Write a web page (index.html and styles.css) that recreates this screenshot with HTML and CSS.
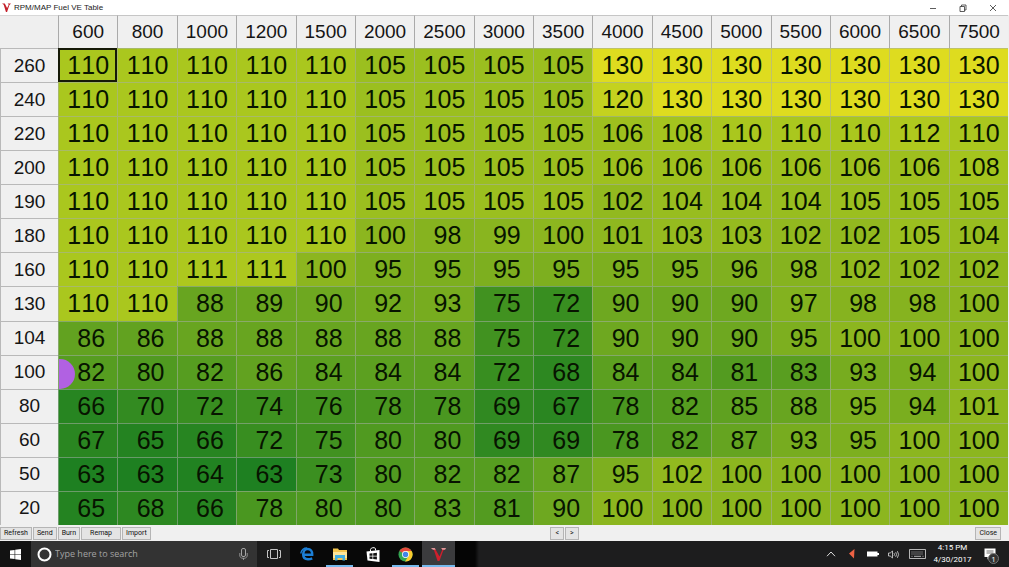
FILE: index.html
```html
<!DOCTYPE html>
<html lang="en">
<head>
<meta charset="utf-8">
<title>RPM/MAP Fuel VE Table</title>
<link rel="stylesheet" href="styles.css">
</head>
<body>
<header class="titlebar">
  <svg class="logo" viewBox="0 0 16 16" aria-hidden="true"><path d="M0 1h5l4 8 3-6-2-2h6l-3 3-4 12H7L3 3z" fill="#c4202b"/></svg>
  <h1 class="title">RPM/MAP Fuel VE Table</h1>
  <div class="window-buttons">
    <button aria-label="Minimize"><svg viewBox="0 0 8 8"><path d="M1 4.500h6"/></svg></button>
    <button aria-label="Restore"><svg viewBox="0 0 8 8"><path d="M1 2.500h4.500v5H1zM2.500 2.500V1H7v5H5.500"/></svg></button>
    <button aria-label="Close window"><svg viewBox="0 0 8 8"><path d="M1 1l6 6M7 1L1 7"/></svg></button>
  </div>
</header>

<main class="grid-area">
  <table class="ve-table">
    <thead><tr id="rpm"><td class="corner"></td></tr></thead>
    <tbody id="cells"></tbody>
  </table>
</main>

<div class="toolbar">
  <div class="tool-group">
    <button class="tool">Refresh</button><button class="tool">Send</button><button class="tool">Burn</button><button class="tool tool-wide">Remap</button><button class="tool">Import</button>
  </div>
  <div class="tool-group pager">
    <button class="tool">&lt;</button><button class="tool">&gt;</button>
  </div>
  <div class="tool-group tool-end"><button class="tool">Close</button></div>
</div>

<footer class="taskbar">
  <button class="start" aria-label="Start"><svg width="11" height="11" viewBox="0 0 11 11"><path d="M0 1.600l4.600-.7v4.300H0zM5.200.8L11 0v5.200H5.200zM0 5.800h4.600v4.300L0 9.400zM5.200 5.800H11V11l-5.800-.8z" fill="#fff"/></svg></button>
  <div class="search">
    <svg width="15" height="15" viewBox="0 0 15 15"><circle cx="7.500" cy="7.500" r="6" fill="none" stroke="#fff" stroke-width="2"/></svg>
    <input type="text" placeholder="Type here to search" aria-label="Type here to search">
    <svg width="9" height="12" viewBox="0 0 9 12" fill="none" stroke="#a5a5a5"><rect x="2.500" y=".5" width="4" height="8" rx="1.500"/><path d="M.8 5v3.500l2 1.700h3.400l2-1.700V5M4.500 10v2" stroke-width=".8"/></svg>
  </div>
  <nav class="apps">
    <button class="app app-view" aria-label="Task View"><svg width="14" height="12" viewBox="0 0 14 12" fill="none" stroke="#c4c4c4"><path d="M3.500 1.500h7v9h-7zM2 2.500H.5v7H2M12 2.500h1.500v7H12"/></svg></button>
    <button class="app" aria-label="Edge"><svg width="14" height="14" viewBox="0 0 14 14" fill="none" stroke="#1c7fd6"><path d="M4 7.700h8.200C12.500 4 10.500 2 7.600 2 4.800 2 3.200 4.600 3.200 7.600c0 3 2 4.700 4.800 4.700 1.700 0 3-.4 4.200-1" stroke-width="2.500"/><path d="M.7 6.500C1.500 3.200 4 1 7 1" stroke-width="1.300"/></svg></button>
    <button class="app app-open" aria-label="File Explorer"><svg width="16" height="13" viewBox="0 0 16 13"><path d="M1 .5h5l1 1.500h8v10H1z" fill="#f4c64e"/><path d="M1 4h14v6H1z" fill="#fde69a"/><path d="M3 7h10v5.500h-2.500V10h-5v2.500H3z" fill="#42aee0"/></svg></button>
    <button class="app" aria-label="Store"><svg width="14" height="15" viewBox="0 0 14 15"><path d="M.5 4.500L13.500 3v12L1.500 13.500z" fill="#fff"/><path d="M4.500 4V2.500C4.500.5 9.500-.2 9.500 2v1.500" fill="none" stroke="#fff"/><path d="M3.500 6.600l3-.3v2.500h-3zM7.200 6.200l3.700-.4v3H7.200zM3.500 9.500h3V12l-3-.3zM7.200 9.500h3.700v3l-3.700-.4z" fill="#111"/></svg></button>
    <button class="app app-open" aria-label="Chrome"><svg width="15" height="15" viewBox="0 0 16 16"><circle cx="8" cy="8" r="7.500" fill="#33a652"/><path d="M8 8L1.500 4.250A7.500 7.500 0 0 1 14.500 4.250H8z" fill="#e5483b"/><path d="M14.500 4.250A7.500 7.500 0 0 1 7.500 15.500L11.200 9.500 8 4.250z" fill="#fbcb2e"/><circle cx="8" cy="8" r="3.700" fill="#fff"/><circle cx="8" cy="8" r="2.900" fill="#4285e8"/></svg></button>
    <button class="app app-open app-active" aria-label="VE Table"><svg width="15" height="15" viewBox="0 0 16 16"><path d="M0 1h4l5 9 3-7-1-2h5l-3 3-4 11H7L3 3z" fill="#cf1f2c"/><path d="M0 1h4l1 2H2zM11 1h5l-1 2h-3z" fill="#d99a9c"/></svg></button>
  </nav>
  <div class="desktop-strip"></div>
  <div class="tray">
    <button aria-label="Show hidden icons"><svg width="10" height="6" viewBox="0 0 10 6"><path d="M1 5.200L5 1l4 4.200" fill="none" stroke="#ddd"/></svg></button>
    <button aria-label="Notifier"><svg width="8" height="10" viewBox="0 0 8 10"><path d="M1 4.500L6.500 0 6 9.500z" fill="#ee6244"/></svg></button>
    <button aria-label="Battery"><svg width="12" height="6" viewBox="0 0 12 6"><path d="M0 .5h10.500V2H12v2h-1.500v1.500H0z" fill="#fff"/></svg></button>
    <button aria-label="Volume"><svg width="12" height="9" viewBox="0 0 12 9" fill="none" stroke="#ddd" stroke-width=".8"><path d="M.5 3h1.700L4.500 1v7L2.200 6H.5zM6 3.200q1 1.300 0 2.600M7.700 2.200q1.700 2.300 0 4.600M9.400 1.200q2.400 3.300 0 6.600"/></svg></button>
    <button class="keyboard" aria-label="Keyboard"><svg width="17" height="10" viewBox="0 0 17 10" fill="none" stroke="#ddd" stroke-width=".8"><path d="M.5.500h16v9H.5z"/><path d="M2.500 3h12M2.500 5h12" stroke-dasharray="1 1"/><path d="M2.500 7.300h1M5 7.300h7M13.500 7.300h1"/></svg></button>
    <div class="clock"><span>4:15 PM</span><span>4/30/2017</span></div>
    <button class="notice" aria-label="1 notification"><svg width="12" height="12" viewBox="0 0 12 12"><path d="M.5.500h11v8.500H6L3.500 11.500V9h-3z" fill="#fff"/><path d="M2.500 3h7M2.500 5h7" stroke="#333" stroke-width=".7"/></svg><span class="count">1</span></button>
  </div>
</footer>
<script src="table.js"></script>
</body>
</html>
```
FILE: styles.css
```css
* { box-sizing: border-box; }

body {
  margin: 0;
  height: 100vh;
  display: flex;
  flex-direction: column;
  overflow: hidden;
  background: #efefef;
  font-family: "Open Sans", "Noto Sans", sans-serif;
}

button {
  margin: 0;
  padding: 0;
  border: 0;
  background: none;
  color: inherit;
  font: inherit;
}

svg { display: block; }

.titlebar {
  flex: none;
  display: flex;
  align-items: center;
  height: 15px;
  padding-left: 2px;
  background: #fff;
}
.logo { width: 9px; height: 9px; }
.title {
  flex: 1;
  margin: 0 0 0 3px;
  font-family: "Liberation Sans", Arial, sans-serif;
  font-size: 8px;
  line-height: 15px;
  font-weight: 400;
  color: #222;
}
.window-buttons { display: flex; padding-right: 1px; }
.window-buttons button {
  width: 30px;
  height: 15px;
  display: grid;
  place-items: center;
}
.window-buttons svg {
  width: 8px;
  height: 8px;
  fill: none;
  stroke: #333;
  stroke-width: 0.8;
}

.grid-area {
  flex: 1;
  min-height: 0;
  padding-right: 1px;
}
.ve-table {
  width: 100%;
  height: 100%;
  table-layout: fixed;
  border-collapse: separate;
  border-spacing: 0;
  font-family: "Liberation Sans", Arial, sans-serif;
  font-kerning: none;
  text-align: center;
}
.ve-table th, .ve-table td { padding: 0; }
.ve-table th {
  border: solid #b9b9b9;
  border-width: 1px 0 0 1px;
  background: #f0f0f0;
  color: #151515;
  font-size: 19px;
  line-height: 20px;
  font-weight: 400;
}
.ve-table thead tr { height: 33px; }
.ve-table thead th {
  border-top-color: #c6c6c6;
  border-left: 1px solid #aaa;
}
.ve-table .corner {
  width: 58px;
  border-top: 1px solid #d8d8d8;
}
.value {
  position: relative;
  border: solid rgba(165, 175, 165, 0.55);
  border-width: 1px 0 0 1px;
  color: #071400;
  font-size: 25px;
  line-height: 26px;
}
.ve-table .value { padding-bottom: 1px; }
.ve-table .two-digit { padding-left: 6px; }
.selected { outline: 2px solid #161a08; outline-offset: -2px; }

.marker {
  position: absolute;
  left: 0;
  top: 3px;
  width: 16px;
  height: 30px;
  border-radius: 0 15px 15px 0;
  background: #b161e2;
}

.toolbar {
  flex: none;
  display: grid;
  grid-template-columns: 1fr auto 1fr;
  align-items: center;
  height: 16px;
  padding: 0 8px 0 0;
  background: #f0f0f0;
}
.tool-group { display: flex; gap: 1px; }
.pager { padding-left: 128px; }
.tool-end { justify-content: flex-end; }
.tool {
  height: 13px;
  padding: 0 3px;
  border: 1px solid #b5b5b5;
  background: #e4e4e4;
  color: #111;
  font-family: Roboto, "Liberation Sans", sans-serif;
  font-size: 7px;
  line-height: 10px;
}
.tool-wide { padding: 0 8px; }
.pager .tool { padding: 0 4px; }

.taskbar {
  flex: none;
  display: flex;
  height: 26px;
  background: #1d1d1e;
  color: #fff;
}
.start {
  width: 31px;
  display: grid;
  place-items: center;
  background: #121212;
}
.search {
  flex: none;
  width: 226px;
  display: flex;
  align-items: center;
  gap: 3px;
  padding: 0 9px 0 6px;
  background: #333;
}
.search input {
  flex: 1;
  min-width: 0;
  padding: 0;
  border: 0;
  outline: 0;
  background: none;
  color: #fff;
  font: 9px/14px "Open Sans", "Noto Sans", sans-serif;
}
.search input::placeholder { color: #a3a3a3; opacity: 1; }
.apps { display: flex; background: #080808; }
.app {
  width: 33px;
  display: grid;
  place-items: center;
  border: solid transparent;
  border-width: 0 3px;
}
.app-view { background: #1c1c1c; }
.app-open { box-shadow: inset 0 -2px #76b9ed; }
.app-active { background: #3b3b3d; border-width: 0; }
.desktop-strip {
  flex: 1;
  background: linear-gradient(90deg, #050505 20px, #1d1d1e 24px);
}
.tray { display: flex; align-items: center; padding-right: 4px; }
.tray button {
  width: 21px;
  height: 26px;
  display: grid;
  place-items: center;
}
.tray .keyboard { width: 27px; }
.clock {
  width: 43px;
  display: flex;
  flex-direction: column;
  align-items: center;
  font-family: Roboto, "Liberation Sans", sans-serif;
  font-size: 8px;
  line-height: 12px;
}
.tray .notice { position: relative; width: 31px; }
.count {
  position: absolute;
  left: 14px;
  top: 12px;
  width: 11px;
  height: 11px;
  border: 1px solid #777;
  border-radius: 50%;
  background: #333;
  font-size: 8px;
  line-height: 9px;
  text-align: center;
}
```
FILE: table.js
```js
const rpm = [600, 800, 1000, 1200, 1500, 2000, 2500, 3000, 3500, 4000, 4500, 5000, 5500, 6000, 6500, 7500];
const rows = [
  [260, 110, 110, 110, 110, 110, 105, 105, 105, 105, 130, 130, 130, 130, 130, 130, 130],
  [240, 110, 110, 110, 110, 110, 105, 105, 105, 105, 120, 130, 130, 130, 130, 130, 130],
  [220, 110, 110, 110, 110, 110, 105, 105, 105, 105, 106, 108, 110, 110, 110, 112, 110],
  [200, 110, 110, 110, 110, 110, 105, 105, 105, 105, 106, 106, 106, 106, 106, 106, 108],
  [190, 110, 110, 110, 110, 110, 105, 105, 105, 105, 102, 104, 104, 104, 105, 105, 105],
  [180, 110, 110, 110, 110, 110, 100, 98, 99, 100, 101, 103, 103, 102, 102, 105, 104],
  [160, 110, 110, 111, 111, 100, 95, 95, 95, 95, 95, 95, 96, 98, 102, 102, 102],
  [130, 110, 110, 88, 89, 90, 92, 93, 75, 72, 90, 90, 90, 97, 98, 98, 100],
  [104, 86, 86, 88, 88, 88, 88, 88, 75, 72, 90, 90, 90, 95, 100, 100, 100],
  [100, 82, 80, 82, 86, 84, 84, 84, 72, 68, 84, 84, 81, 83, 93, 94, 100],
  [80, 66, 70, 72, 74, 76, 78, 78, 69, 67, 78, 82, 85, 88, 95, 94, 101],
  [60, 67, 65, 66, 72, 75, 80, 80, 69, 69, 78, 82, 87, 93, 95, 100, 100],
  [50, 63, 63, 64, 63, 73, 80, 82, 82, 87, 95, 102, 100, 100, 100, 100, 100],
  [20, 65, 68, 66, 78, 80, 80, 83, 81, 90, 100, 100, 100, 100, 100, 100, 100]
];

// Colour stops of the heat scale: value, red, green, blue.
const stops = [[63, 30, 128, 33], [80, 80, 154, 32], [100, 140, 182, 31], [110, 170, 199, 30], [130, 222, 220, 31]];

function heat(v) {
  const i = Math.max(1, stops.findIndex(s => v <= s[0]));
  const a = stops[i - 1], b = stops[i];
  const t = (v - a[0]) / (b[0] - a[0]);
  return `rgb(${[1, 2, 3].map(k => Math.round(a[k] + (b[k] - a[k]) * t)).join(", ")})`;
}

function heading(text, scope) {
  const th = document.createElement("th");
  th.scope = scope;
  th.textContent = text;
  return th;
}

const head = document.getElementById("rpm");
rpm.forEach(n => head.append(heading(n, "col")));

const body = document.getElementById("cells");
rows.forEach(([map, ...values], r) => {
  const tr = body.insertRow();
  tr.append(heading(map, "row"));
  values.forEach((v, c) => {
    const td = tr.insertCell();
    td.className = "value";
    if (v < 100) td.classList.add("two-digit");
    if (r === 0 && c === 0) td.classList.add("selected");
    td.style.background = heat(v);
    td.textContent = v;
    if (map === 100 && c === 0) {
      const dot = document.createElement("span");
      dot.className = "marker";
      td.append(dot);
    }
  });
});
```
